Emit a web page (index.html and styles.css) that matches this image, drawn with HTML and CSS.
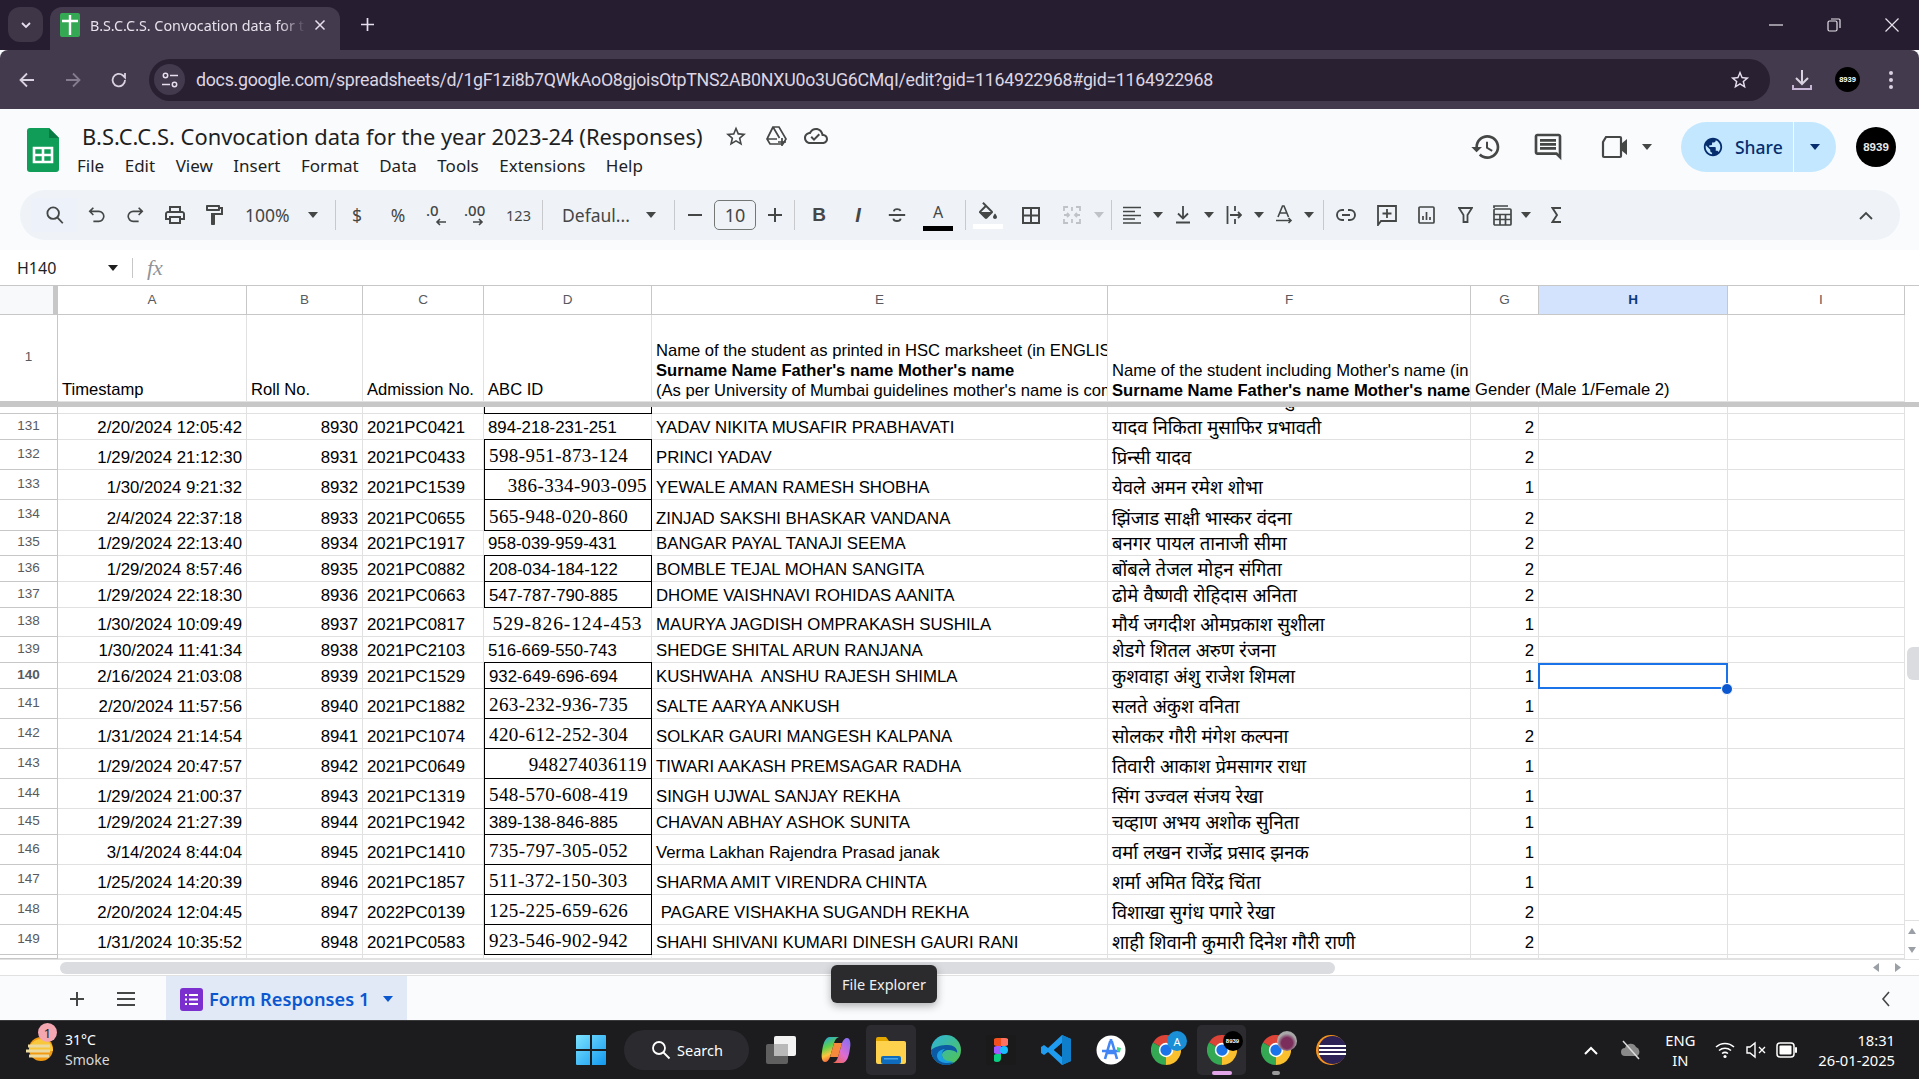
FILE: index.html
```html
<!DOCTYPE html>
<html lang="en">
<head>
<meta charset="utf-8">
<title>B.S.C.C.S. Convocation data for the year 2023-24 (Responses)</title>
<link rel="stylesheet" href="styles.css">
</head>
<body>
<svg class="defs" width="0" height="0">
  <symbol id="chrome" viewBox="0 0 48 48">
    <path fill="#db4437" d="M24 24L3.2 12A24 24 0 0 1 44.8 12Z"/>
    <path fill="#fbc02d" d="M24 24L44.8 12A24 24 0 0 1 24 48Z"/>
    <path fill="#34a853" d="M24 24L24 48A24 24 0 0 1 3.2 12Z"/>
    <circle cx="24" cy="24" r="11.5" fill="#fff"/>
    <circle cx="24" cy="24" r="9" fill="#1a73e8"/>
  </symbol>
  <symbol id="caret" viewBox="0 0 10 6"><path d="M0 0h10L5 6z" fill="currentColor"/></symbol>
  <symbol id="star" viewBox="0 0 24 24"><path fill="currentColor" d="M22 9.24l-7.19-.62L12 2 9.19 8.63 2 9.24l5.46 4.73L5.82 21 12 17.27 18.18 21l-1.63-7.03L22 9.24zM12 15.4l-3.76 2.27 1-4.28-3.32-2.88 4.38-.38L12 6.1l1.71 4.04 4.38.38-3.32 2.88 1 4.28L12 15.4z"/></symbol>
</svg>

<div class="tabstrip">
  <div class="tabsearch"><svg width="14" height="14" viewBox="0 0 14 14"><path d="M3 5l4 4 4-4" fill="none" stroke="#e6dfee" stroke-width="1.8"/></svg></div>
  <div class="tab">
    <svg class="favicon" width="20" height="24" viewBox="0 0 20 24"><rect width="20" height="24" rx="2" fill="#34a853"/><path d="M2 8h16M10 2v20" stroke="#fff" stroke-width="2.4"/></svg>
    <span class="tabtitle">B.S.C.C.S. Convocation data for t</span>
    <svg class="tabclose" width="12" height="12" viewBox="0 0 12 12"><path d="M1.500 1.500l9 9M10.500 1.500l-9 9" stroke="#e6dfee" stroke-width="1.500"/></svg>
  </div>
  <svg class="newtab" width="15" height="15" viewBox="0 0 15 15"><path d="M7.500 1v13M1 7.500h13" stroke="#e6dfee" stroke-width="1.700"/></svg>
  <div class="winctrl">
    <svg width="14" height="14" viewBox="0 0 14 14"><path d="M0 7h14" stroke="#e6e1ea" stroke-width="1.200"/></svg>
    <svg width="14" height="14" viewBox="0 0 14 14"><rect x="1" y="3" width="9" height="10" rx="1.500" fill="none" stroke="#e6e1ea" stroke-width="1.200"/><path d="M4 1h8a1 1 0 0 1 1 1v8" fill="none" stroke="#e6e1ea" stroke-width="1.200"/></svg>
    <svg width="14" height="14" viewBox="0 0 14 14"><path d="M.5.500l13 13M13.500.500l-13 13" stroke="#e6e1ea" stroke-width="1.200"/></svg>
  </div>
</div>

<div class="navbar">
  <svg class="nav" width="20" height="20" viewBox="0 0 20 20"><path d="M17 10H4M10 3.500L3.500 10l6.500 6.500" fill="none" stroke="#d9d2e0" stroke-width="1.800"/></svg>
  <svg class="nav" width="20" height="20" viewBox="0 0 20 20"><path d="M3 10h13M10 3.500l6.500 6.500-6.500 6.500" fill="none" stroke="#857d8f" stroke-width="1.800"/></svg>
  <svg class="nav" width="20" height="20" viewBox="0 0 20 20"><path d="M16 10a6.200 6.200 0 1 1-2-4.500L16 7.500V3" fill="none" stroke="#d9d2e0" stroke-width="1.800"/></svg>
  <div class="omnibox">
    <div class="siteinfo"><svg width="18" height="18" viewBox="0 0 18 18"><g fill="none" stroke="#e6dfee" stroke-width="1.500"><circle cx="4.500" cy="4.500" r="2.200"/><circle cx="13.500" cy="13.500" r="2.200"/><path d="M9 4.500h8M1 13.500h8"/></g></svg></div>
    <span class="url">docs.google.com/spreadsheets/d/1gF1zi8b7QWkAoO8gjoisOtpTNS2AB0NXU0o3UG6CMqI/edit?gid=1164922968#gid=1164922968</span>
    <svg class="ostar" width="22" height="22"><use href="#star"/></svg>
  </div>
  <svg class="dl" width="24" height="24" viewBox="0 0 24 24"><path d="M12 2v13M6 10l6 6 6-6" fill="none" stroke="#d9d2e0" stroke-width="2"/><path d="M3 17v4h18v-4" fill="none" stroke="#c8b6d6" stroke-width="2"/></svg>
  <div class="navavatar">8939</div>
  <svg class="dots" width="6" height="20" viewBox="0 0 6 20"><circle cx="3" cy="3" r="2" fill="#d9d2e0"/><circle cx="3" cy="10" r="2" fill="#d9d2e0"/><circle cx="3" cy="17" r="2" fill="#d9d2e0"/></svg>
</div>

<header class="apphead">
  <svg class="logo" width="32" height="44" viewBox="0 0 32 44"><path d="M3 0h19l10 10v31a3 3 0 0 1-3 3H3a3 3 0 0 1-3-3V3a3 3 0 0 1 3-3z" fill="#0f9d58"/><path d="M22 0l10 10H22z" fill="#0a7a43"/><path d="M7 20h18v14H7zM16 20v14M7 27h18" fill="none" stroke="#fff" stroke-width="2.600"/></svg>
  <div class="titleblock">
    <div class="titlerow">
      <span class="doctitle">B.S.C.C.S. Convocation data for the year 2023-24 (Responses)</span>
      <svg class="hic first" width="24" height="24"><use href="#star"/></svg>
      <svg class="hic" width="24" height="24" viewBox="0 0 24 24"><path d="M9 3h6l7 12-3 5H6l-3-5zM3.500 15H13M9 3l6.500 11M9 3L3.500 14" fill="none" stroke="#444746" stroke-width="1.700"/><path d="M18 14v8M14 18h8" stroke="#444746" stroke-width="1.700"/></svg>
      <svg class="hic" width="24" height="24" viewBox="0 0 24 24"><path fill="#444746" d="M19.350 10.040C18.670 6.590 15.640 4 12 4 9.110 4 6.600 5.640 5.350 8.040 2.340 8.360 0 10.910 0 14c0 3.310 2.690 6 6 6h13c2.760 0 5-2.240 5-5 0-2.640-2.050-4.780-4.650-4.960zM19 18H6c-2.210 0-4-1.790-4-4 0-2.050 1.530-3.760 3.560-3.970l1.070-.11.5-.95C8.080 7.140 9.940 6 12 6c2.620 0 4.880 1.860 5.390 4.430l.3 1.500 1.530.11c1.560.1 2.780 1.410 2.780 2.960 0 1.650-1.350 3-3 3zm-9-3.820l-2.090-2.090L6.500 13.500 10 17l6.010-6.010-1.410-1.410z"/></svg>
    </div>
    <nav class="menu"><span>File</span><span>Edit</span><span>View</span><span>Insert</span><span>Format</span><span>Data</span><span>Tools</span><span>Extensions</span><span>Help</span></nav>
  </div>
  <div class="headright">
    <svg class="hbtn" width="32" height="32" viewBox="0 0 24 24"><path fill="#444746" d="M13 3c-4.970 0-9 4.030-9 9H1l3.890 3.890.07.14L9 12H6c0-3.870 3.130-7 7-7s7 3.130 7 7-3.130 7-7 7c-1.930 0-3.680-.79-4.940-2.060l-1.420 1.420C8.270 19.990 10.510 21 13 21c4.970 0 9-4.030 9-9s-4.030-9-9-9zm-1 5v5l4.280 2.540.72-1.210-3.500-2.080V8H12z"/></svg>
    <svg class="hbtn b2" width="32" height="32" viewBox="0 0 24 24"><path fill="#444746" d="M21.990 4c0-1.100-.89-2-1.990-2H4c-1.100 0-2 .9-2 2v12c0 1.100.9 2 2 2h14l4 4-.01-18zM20 4v13.170L18.830 16H4V4h16zM6 12h12v2H6zm0-3h12v2H6zm0-3h12v2H6z"/></svg>
    <svg class="video" width="30" height="26" viewBox="0 0 30 26"><path d="M5 3h14a1 1 0 0 1 1 1v18a1 1 0 0 1-1 1H3a1 1 0 0 1-1-1V8z" fill="none" stroke="#444746" stroke-width="2.200"/><path d="M20 10l6-5v16l-6-5z" fill="#444746"/></svg>
    <svg class="vcaret" width="10" height="6"><use href="#caret"/></svg>
    <div class="share">
      <div class="sharemain">
        <svg width="22" height="22" viewBox="0 0 24 24"><path fill="#062e6f" d="M12 2C6.480 2 2 6.480 2 12s4.480 10 10 10 10-4.480 10-10S17.520 2 12 2zM4 12c0-.61.08-1.210.21-1.780L8.990 15v1c0 1.100.9 2 2 2v1.930C7.060 19.430 4 16.070 4 12zm13.890 5.400c-.26-.81-1-1.400-1.900-1.400h-1v-3c0-.55-.45-1-1-1h-6v-2h2c.55 0 1-.45 1-1V7h2c1.100 0 2-.9 2-2v-.41C17.920 5.770 20 8.650 20 12c0 2.080-.81 3.980-2.110 5.400z"/></svg>
        <span>Share</span>
      </div>
      <div class="sharecaret"><svg width="10" height="6"><use href="#caret"/></svg></div>
    </div>
    <div class="appavatar">8939</div>
  </div>
</header>

<div class="toolwrap">
  <div class="toolbar">
    <div class="tb w47 hl"><svg width="22" height="22" viewBox="0 0 24 24"><circle cx="10" cy="10" r="6.300" fill="none" stroke="#444746" stroke-width="2"/><path d="M14.500 14.500l6 6.500" stroke="#444746" stroke-width="2"/></svg></div>
    <div class="tb w37"><svg width="20" height="20" viewBox="0 0 22 22"><path d="M7 3L3 7l4 4M3 7h10a5.500 5.500 0 0 1 0 11H7" fill="none" stroke="#444746" stroke-width="1.800"/></svg></div>
    <div class="tb w40"><svg width="20" height="20" viewBox="0 0 22 22"><path d="M15 3l4 4-4 4M19 7H9a5.500 5.500 0 0 0 0 11h6" fill="none" stroke="#444746" stroke-width="1.800"/></svg></div>
    <div class="tb w40"><svg width="24" height="24" viewBox="0 0 24 24"><path fill="#444746" d="M19 8h-1V3H6v5H5c-1.660 0-3 1.340-3 3v6h4v4h12v-4h4v-6c0-1.660-1.340-3-3-3zM8 5h8v3H8V5zm8 12v2H8v-4h8v2zm2-2v-2H6v2H4v-4c0-.55.45-1 1-1h14c.55 0 1 .45 1 1v4h-2z"/></svg></div>
    <div class="tb w37"><svg width="24" height="24" viewBox="0 0 24 24"><path fill="#444746" d="M18 4V3c0-.55-.45-1-1-1H5c-.55 0-1 .45-1 1v4c0 .55.45 1 1 1h12c.55 0 1-.45 1-1V6h1v4H9v11c0 .55.45 1 1 1h2c.55 0 1-.45 1-1v-9h8V4h-3zm-2 2H6V4h10v2z"/></svg></div>
    <div class="zoomsel"><span>100%</span><svg width="10" height="6"><use href="#caret"/></svg></div>
    <i class="sep"></i>
    <div class="tb w42 tt">$</div>
    <div class="tb w40 tt">%</div>
    <div class="tb w37"><svg width="26" height="26" viewBox="0 0 26 26"><text class="dectext" x="2" y="14">.0</text><path d="M22 20h-9M16 17l-3 3 3 3" fill="none" stroke="#444746" stroke-width="1.600"/></svg></div>
    <div class="tb w46"><svg width="30" height="26" viewBox="0 0 30 26"><text class="dectext" x="1" y="14">.00</text><path d="M10 20h9M16 17l3 3-3 3" fill="none" stroke="#444746" stroke-width="1.600"/></svg></div>
    <div class="tb w35 tt small">123</div>
    <div class="w6"></div>
    <i class="sep"></i>
    <div class="fontsel"><span>Defaul...</span><svg width="10" height="6"><use href="#caret"/></svg></div>
    <i class="sep"></i>
    <div class="tb w39"><svg width="14" height="14" viewBox="0 0 14 14"><path d="M0 7h14" stroke="#444746" stroke-width="2"/></svg></div>
    <div class="sizebox">10</div>
    <div class="tb w38"><svg width="16" height="16" viewBox="0 0 16 16"><path d="M8 1v14M1 8h14" stroke="#444746" stroke-width="2"/></svg></div>
    <i class="sep"></i>
    <div class="tb w48 tt bold">B</div>
    <div class="tb w30 tt bold ital">I</div>
    <div class="tb w48"><svg width="22" height="20" viewBox="0 0 22 22"><path d="M15 6.500C14 4 8 3.500 7.500 7M7 15c.5 3.500 7.500 3.500 8 0M2 11h18" fill="none" stroke="#444746" stroke-width="2"/></svg></div>
    <div class="tb w34 col"><span class="tt colora">A</span><i class="bar"></i></div>
    <div class="w10"></div>
    <i class="sep"></i>
    <div class="tb w44 col"><svg width="24" height="22" viewBox="0 0 24 22"><path fill="#444746" d="M16.560 8.940L7.620 0 6.210 1.410l2.380 2.380-5.150 5.150c-.59.590-.59 1.540 0 2.120l5.500 5.500c.29.29.68.44 1.060.44s.77-.15 1.060-.44l5.500-5.500c.59-.58.59-1.530 0-2.120zM5.210 10L10 5.210 14.790 10H5.210zM19 11.500s-2 2.170-2 3.500c0 1.100.9 2 2 2s2-.9 2-2c0-1.330-2-3.500-2-3.500z"/></svg><i class="bar white"></i></div>
    <div class="tb w42"><svg width="18" height="17" viewBox="0 0 18 17"><path d="M1 1h16v15H1zM9 1v15M1 8.500h16" fill="none" stroke="#444746" stroke-width="2"/></svg></div>
    <div class="tb w40"><svg width="18" height="18" viewBox="0 0 18 18"><path d="M1 5V1h4M13 1h4v4M1 13v4h4M13 17h4v-4M6 9H1M12 9h5M4 7l2 2-2 2M14 7l-2 2 2 2M9 1v4M9 13v4" fill="none" stroke="#bfc2c6" stroke-width="1.800"/></svg></div>
    <div class="tb w14 dim"><svg width="10" height="6"><use href="#caret"/></svg></div>
    <div class="w5"></div>
    <i class="sep"></i>
    <div class="tb w40"><svg width="18" height="18" viewBox="0 0 18 18"><path d="M0 1.500h18M0 5.500h12M0 9.500h18M0 13h12M0 17h18" stroke="#444746" stroke-width="1.700"/></svg></div>
    <div class="tb w11"><svg width="10" height="6"><use href="#caret"/></svg></div>
    <div class="tb w40"><svg width="16" height="18" viewBox="0 0 16 18"><path d="M8 0v12M3 7.500l5 5 5-5" fill="none" stroke="#444746" stroke-width="1.800"/><path d="M1 16.500h14" stroke="#444746" stroke-width="2"/></svg></div>
    <div class="tb w11"><svg width="10" height="6"><use href="#caret"/></svg></div>
    <div class="tb w40"><svg width="16" height="18" viewBox="0 0 16 18"><path d="M1.500 0v18M9 0v5M9 13v5M4 9h11M12 6l3 3-3 3" fill="none" stroke="#444746" stroke-width="1.800"/></svg></div>
    <div class="tb w10"><svg width="10" height="6"><use href="#caret"/></svg></div>
    <div class="tb w40"><svg width="17" height="20" viewBox="0 0 17 20"><path d="M2 12L6.500 1h1.500L12.500 12M3.500 8h7.500" fill="none" stroke="#444746" stroke-width="1.600"/><path d="M0 15.500h15M12.500 13l2.500 2.500-2.500 2.500" fill="none" stroke="#444746" stroke-width="1.600"/></svg></div>
    <div class="tb w9"><svg width="10" height="6"><use href="#caret"/></svg></div>
    <div class="w10"></div>
    <i class="sep"></i>
    <div class="tb w44"><svg width="20" height="14" viewBox="0 0 20 14"><path d="M8 2H6a5 5 0 0 0 0 10h2M12 2h2a5 5 0 0 1 0 10h-2M6 7h8" fill="none" stroke="#444746" stroke-width="1.900"/></svg></div>
    <div class="tb w38"><svg width="20" height="21" viewBox="0 0 20 21"><path d="M1 1h18v15H4l-3 4zM10 4v9M5.500 8.500h9" fill="none" stroke="#444746" stroke-width="1.800"/></svg></div>
    <div class="tb w40"><svg width="17" height="18" viewBox="0 0 17 18"><path d="M2 1h13a1 1 0 0 1 1 1v14a1 1 0 0 1-1 1H2a1 1 0 0 1-1-1V2a1 1 0 0 1 1-1zM5 10v4M8.500 6v8M12 11v3" fill="none" stroke="#444746" stroke-width="1.700"/></svg></div>
    <div class="tb w38"><svg width="15" height="16" viewBox="0 0 15 16"><path d="M1 1h13L9.500 8v7h-4V8z" fill="none" stroke="#444746" stroke-width="1.800"/></svg></div>
    <div class="tb w38"><svg width="20" height="21" viewBox="0 0 20 21"><path d="M1 3V1h14M2 4h15a1 1 0 0 1 1 1v14a1 1 0 0 1-1 1H2a1 1 0 0 1-1-1V5a1 1 0 0 1 1-1zM1 9.500h17M7 9.500V20M12.500 9.500V20M1 14.500h17" fill="none" stroke="#444746" stroke-width="1.700"/></svg></div>
    <div class="tb w8"><svg width="10" height="6"><use href="#caret"/></svg></div>
    <div class="tb w52"><svg width="11" height="16" viewBox="0 0 11 16"><path d="M10 1H1.500L6 8l-4.500 7H10" fill="none" stroke="#444746" stroke-width="1.900"/></svg></div>
    <div class="collapse"><svg width="14" height="9" viewBox="0 0 14 9"><path d="M1 8l6-6 6 6" fill="none" stroke="#444746" stroke-width="1.800"/></svg></div>
  </div>
</div>

<div class="formulabar">
  <div class="namebox"><span>H140</span><svg width="10" height="6"><use href="#caret"/></svg></div>
  <i class="fxsep"></i>
  <span class="fx">fx</span>
</div>

<div class="grid">
  <div class="row colhead">
    <div class="corner"></div><div class="ch">A</div><div class="ch">B</div><div class="ch">C</div><div class="ch">D</div><div class="ch">E</div><div class="ch">F</div><div class="ch">G</div><div class="ch selh">H</div><div class="ch lastch">I</div>
  </div>
  <div class="row first">
    <div class="rh rhc">1</div>
    <div class="c">Timestamp</div>
    <div class="c">Roll No.</div>
    <div class="c">Admission No.</div>
    <div class="c">ABC ID</div>
    <div class="c clip">Name of the student as printed in HSC marksheet (in ENGLISH)<br><b>Surname Name Father's name Mother's name</b><br>(As per University of Mumbai guidelines mother's name is compulsory)</div>
    <div class="c clip">Name of the student including Mother's name (in Devanagari)<br><b>Surname Name Father's name Mother's name</b></div>
    <div class="c over">Gender (Male 1/Female 2)</div>
    <div class="c"></div>
    <div class="c"></div>
  </div>
  <div class="freeze"></div>
  <div class="body">
    <div class="rows">
      <div class="row h7"><div class="rh"></div><div class="c r">1/30/2024 9:42:15</div><div class="c r">8929</div><div class="c">2021PC0251</div><div class="c box"></div><div class="c">WANKHADE ASHISH ANIL MADHURI</div><div class="c">वानखडे आशिष अनिल माधुरी</div><div class="c r">1</div><div class="c"></div><div class="c"></div></div>
      <div class="row h26"><div class="rh">131</div><div class="c r">2/20/2024 12:05:42</div><div class="c r">8930</div><div class="c">2021PC0421</div><div class="c">894-218-231-251</div><div class="c">YADAV NIKITA MUSAFIR PRABHAVATI</div><div class="c">यादव निकिता मुसाफिर प्रभावती</div><div class="c r">2</div><div class="c"></div><div class="c"></div></div>
      <div class="row h30"><div class="rh">132</div><div class="c r">1/29/2024 21:12:30</div><div class="c r">8931</div><div class="c">2021PC0433</div><div class="c box tm top">598-951-873-124</div><div class="c">PRINCI YADAV</div><div class="c">प्रिन्सी यादव</div><div class="c r">2</div><div class="c"></div><div class="c"></div></div>
      <div class="row h30"><div class="rh">133</div><div class="c r">1/30/2024 9:21:32</div><div class="c r">8932</div><div class="c">2021PC1539</div><div class="c box tm r">386-334-903-095</div><div class="c">YEWALE AMAN RAMESH SHOBHA</div><div class="c">येवले अमन रमेश शोभा</div><div class="c r">1</div><div class="c"></div><div class="c"></div></div>
      <div class="row h31"><div class="rh">134</div><div class="c r">2/4/2024 22:37:18</div><div class="c r">8933</div><div class="c">2021PC0655</div><div class="c box tm">565-948-020-860</div><div class="c">ZINJAD SAKSHI BHASKAR VANDANA</div><div class="c">झिंजाड साक्षी भास्कर वंदना</div><div class="c r">2</div><div class="c"></div><div class="c"></div></div>
      <div class="row h25"><div class="rh">135</div><div class="c r">1/29/2024 22:13:40</div><div class="c r">8934</div><div class="c">2021PC1917</div><div class="c">958-039-959-431</div><div class="c">BANGAR PAYAL TANAJI SEEMA</div><div class="c">बनगर पायल तानाजी सीमा</div><div class="c r">2</div><div class="c"></div><div class="c"></div></div>
      <div class="row h26"><div class="rh">136</div><div class="c r">1/29/2024 8:57:46</div><div class="c r">8935</div><div class="c">2021PC0882</div><div class="c box top">208-034-184-122</div><div class="c">BOMBLE TEJAL MOHAN SANGITA</div><div class="c">बोंबले तेजल मोहन संगिता</div><div class="c r">2</div><div class="c"></div><div class="c"></div></div>
      <div class="row h26"><div class="rh">137</div><div class="c r">1/29/2024 22:18:30</div><div class="c r">8936</div><div class="c">2021PC0663</div><div class="c box">547-787-790-885</div><div class="c">DHOME VAISHNAVI ROHIDAS AANITA</div><div class="c">ढोमे वैष्णवी रोहिदास अनिता</div><div class="c r">2</div><div class="c"></div><div class="c"></div></div>
      <div class="row h29"><div class="rh">138</div><div class="c r">1/30/2024 10:09:49</div><div class="c r">8937</div><div class="c">2021PC0817</div><div class="c tm wide">529-826-124-453</div><div class="c">MAURYA JAGDISH OMPRAKASH SUSHILA</div><div class="c">मौर्य जगदीश ओमप्रकाश सुशीला</div><div class="c r">1</div><div class="c"></div><div class="c"></div></div>
      <div class="row h26"><div class="rh">139</div><div class="c r">1/30/2024 11:41:34</div><div class="c r">8938</div><div class="c">2021PC2103</div><div class="c">516-669-550-743</div><div class="c">SHEDGE SHITAL ARUN RANJANA</div><div class="c">शेडगे शितल अरुण रंजना</div><div class="c r">2</div><div class="c"></div><div class="c"></div></div>
      <div class="row h26"><div class="rh selh">140</div><div class="c r">2/16/2024 21:03:08</div><div class="c r">8939</div><div class="c">2021PC1529</div><div class="c box top">932-649-696-694</div><div class="c">KUSHWAHA &nbsp;ANSHU RAJESH SHIMLA</div><div class="c">कुशवाहा अंशु राजेश शिमला</div><div class="c r">1</div><div class="c sel"></div><div class="c"></div></div>
      <div class="row h30"><div class="rh">141</div><div class="c r">2/20/2024 11:57:56</div><div class="c r">8940</div><div class="c">2021PC1882</div><div class="c box tm">263-232-936-735</div><div class="c">SALTE AARYA ANKUSH</div><div class="c">सलते अंकुश वनिता</div><div class="c r">1</div><div class="c"></div><div class="c"></div></div>
      <div class="row h30"><div class="rh">142</div><div class="c r">1/31/2024 21:14:54</div><div class="c r">8941</div><div class="c">2021PC1074</div><div class="c box tm">420-612-252-304</div><div class="c">SOLKAR GAURI MANGESH KALPANA</div><div class="c">सोलकर गौरी मंगेश कल्पना</div><div class="c r">2</div><div class="c"></div><div class="c"></div></div>
      <div class="row h30"><div class="rh">143</div><div class="c r">1/29/2024 20:47:57</div><div class="c r">8942</div><div class="c">2021PC0649</div><div class="c box tm r">948274036119</div><div class="c">TIWARI AAKASH PREMSAGAR RADHA</div><div class="c">तिवारी आकाश प्रेमसागर राधा</div><div class="c r">1</div><div class="c"></div><div class="c"></div></div>
      <div class="row h30"><div class="rh">144</div><div class="c r">1/29/2024 21:00:37</div><div class="c r">8943</div><div class="c">2021PC1319</div><div class="c box tm">548-570-608-419</div><div class="c">SINGH UJWAL SANJAY REKHA</div><div class="c">सिंग उज्वल संजय रेखा</div><div class="c r">1</div><div class="c"></div><div class="c"></div></div>
      <div class="row h26"><div class="rh">145</div><div class="c r">1/29/2024 21:27:39</div><div class="c r">8944</div><div class="c">2021PC1942</div><div class="c box">389-138-846-885</div><div class="c">CHAVAN ABHAY ASHOK SUNITA</div><div class="c">चव्हाण अभय अशोक सुनिता</div><div class="c r">1</div><div class="c"></div><div class="c"></div></div>
      <div class="row h30"><div class="rh">146</div><div class="c r">3/14/2024 8:44:04</div><div class="c r">8945</div><div class="c">2021PC1410</div><div class="c box tm">735-797-305-052</div><div class="c">Verma Lakhan Rajendra Prasad janak</div><div class="c">वर्मा लखन राजेंद्र प्रसाद झनक</div><div class="c r">1</div><div class="c"></div><div class="c"></div></div>
      <div class="row h30"><div class="rh">147</div><div class="c r">1/25/2024 14:20:39</div><div class="c r">8946</div><div class="c">2021PC1857</div><div class="c box tm">511-372-150-303</div><div class="c">SHARMA AMIT VIRENDRA CHINTA</div><div class="c">शर्मा अमित विरेंद्र चिंता</div><div class="c r">1</div><div class="c"></div><div class="c"></div></div>
      <div class="row h30"><div class="rh">148</div><div class="c r">2/20/2024 12:04:45</div><div class="c r">8947</div><div class="c">2022PC0139</div><div class="c box tm">125-225-659-626</div><div class="c">&nbsp;PAGARE VISHAKHA SUGANDH REKHA</div><div class="c">विशाखा सुगंध पगारे रेखा</div><div class="c r">2</div><div class="c"></div><div class="c"></div></div>
      <div class="row h30"><div class="rh">149</div><div class="c r">1/31/2024 10:35:52</div><div class="c r">8948</div><div class="c">2021PC0583</div><div class="c box tm">923-546-902-942</div><div class="c">SHAHI SHIVANI KUMARI DINESH GAURI RANI</div><div class="c">शाही शिवानी कुमारी दिनेश गौरी राणी</div><div class="c r">2</div><div class="c"></div><div class="c"></div></div>
      <div class="row h4"><div class="rh"></div><div class="c"></div><div class="c"></div><div class="c"></div><div class="c"></div><div class="c"></div><div class="c"></div><div class="c"></div><div class="c"></div><div class="c"></div></div>
    </div>
    <div class="vscroll">
      <div class="vthumb"></div>
      <div class="varrows">
        <svg width="8" height="6"><path d="M0 6h8L4 0z" fill="#9aa0a6"/></svg>
        <svg width="8" height="6"><path d="M0 0h8L4 6z" fill="#9aa0a6"/></svg>
      </div>
    </div>
  </div>
  <div class="hscroll">
    <div class="hthumb"></div>
    <div class="harrows">
      <svg width="6" height="9"><path d="M6 0v9L0 4.500z" fill="#9aa0a6"/></svg>
      <svg width="6" height="9"><path d="M0 0v9l6-4.500z" fill="#9aa0a6"/></svg>
    </div>
  </div>
</div>

<div class="sheetbar">
  <svg class="addsheet" width="16" height="16" viewBox="0 0 16 16"><path d="M8 1v14M1 8h14" stroke="#444746" stroke-width="2"/></svg>
  <svg class="allsheets" width="20" height="14" viewBox="0 0 20 14"><path d="M1 1h18M1 7h18M1 13h18" stroke="#444746" stroke-width="2"/></svg>
  <div class="sheettab">
    <svg width="23" height="23" viewBox="0 0 23 23"><rect width="23" height="23" rx="3" fill="#7b2fcf"/><path d="M9 7h9M9 11.500h9M9 16h9M5 7h2M5 11.500h2M5 16h2" stroke="#fff" stroke-width="2"/></svg>
    <span>Form Responses 1</span>
    <svg width="10" height="6"><use href="#caret"/></svg>
  </div>
  <svg class="sidepanel" width="10" height="16" viewBox="0 0 10 16"><path d="M8 1L2 8l6 7" fill="none" stroke="#444746" stroke-width="1.600"/></svg>
</div>

<div class="tooltip">File Explorer</div>

<footer class="taskbar">
  <div class="weather">
    <div class="wicon">
      <svg width="32" height="32" viewBox="0 0 32 32"><circle cx="17" cy="15" r="12" fill="#f29a12"/><path d="M5 17a12 12 0 0 1 24 0z" fill="#f9c73c"/><path d="M4 12h22M2 17h24M5 22h20" stroke="#ecd9a0" stroke-width="3"/></svg>
      <span class="wbadge">1</span>
    </div>
    <div class="wtext"><span>31°C</span><span>Smoke</span></div>
  </div>
  <div class="tbicons">
    <svg class="win" width="30" height="30" viewBox="0 0 30 30"><defs><linearGradient id="w" x1="0" y1="0" x2="1" y2="1"><stop offset="0" stop-color="#7de3ff"/><stop offset="1" stop-color="#1298ef"/></linearGradient></defs><path fill="url(#w)" d="M0 1a1 1 0 0 1 1-1h13v14H0zM16 0h13a1 1 0 0 1 1 1v13H16zM0 16h14v14H1a1 1 0 0 1-1-1zM16 16h14v13a1 1 0 0 1-1 1H16z"/></svg>
    <div class="search">
      <svg width="20" height="20" viewBox="0 0 20 20"><circle cx="8" cy="8" r="6" fill="none" stroke="#fff" stroke-width="1.800"/><path d="M12.500 12.500l6 6" stroke="#fff" stroke-width="1.800"/></svg>
      <span>Search</span>
    </div>
    <svg class="ti t1" width="30" height="28" viewBox="0 0 30 28"><rect y="8" width="22" height="20" rx="2" fill="#5f5f5f"/><rect x="8" width="22" height="20" rx="2" fill="#f2f2f2"/><rect x="8" y="8" width="14" height="12" fill="#b8b8b8"/></svg>
    <svg class="ti t2" width="30" height="30" viewBox="0 0 30 30"><defs><linearGradient id="cpa" x1="0" y1="0" x2=".3" y2="1"><stop offset="0" stop-color="#1f9fe8"/><stop offset=".45" stop-color="#5fd14a"/><stop offset=".75" stop-color="#ffc53d"/><stop offset="1" stop-color="#f4663f"/></linearGradient><linearGradient id="cpb" x1=".7" y1="0" x2="0" y2="1"><stop offset="0" stop-color="#8f6ff0"/><stop offset=".5" stop-color="#e06cd0"/><stop offset="1" stop-color="#f4663f"/></linearGradient></defs><path fill="url(#cpa)" d="M9 2h9c-3 1-4 3-5 6l-4 14c-1 3-3 5-5 5C1 27 0 22 1 17 2 9 4 2 9 2z"/><path fill="url(#cpb)" d="M21 28h-9c3-1 4-3 5-6l4-14c1-3 3-5 5-5 3 0 4 5 3 10-1 8-3 15-8 15z"/><path d="M13 8h8l-4 14H9z" fill="#f58a3c"/></svg>
    <div class="fe">
      <svg width="30" height="27" viewBox="0 0 30 27"><path d="M0 2a2 2 0 0 1 2-2h8l3 4H0z" fill="#e3a700"/><path d="M0 4h28a2 2 0 0 1 2 2v19a2 2 0 0 1-2 2H2a2 2 0 0 1-2-2z" fill="#ffd24d"/><rect x="5" y="19" width="20" height="8" rx="2" fill="#0f6cbd"/><rect x="8" y="21" width="14" height="1.500" fill="#4aa4e8"/></svg>
    </div>
    <svg class="ti t4" width="30" height="30" viewBox="0 0 30 30"><defs><linearGradient id="ed" x1="0" y1="0" x2="1" y2="1"><stop offset="0" stop-color="#2db4e0"/><stop offset="1" stop-color="#52c44a"/></linearGradient></defs><circle cx="15" cy="15" r="15" fill="url(#ed)"/><path d="M0 15A15 15 0 0 0 24 27c-7 2-13-2-13-7 0-3 3-5 7-5 3 0 7 1 8 3 1-4-3-8-9-8-6 0-12 1-17 5z" fill="#0c59a4"/><path d="M11 20c0 4 5 7 11 6-3 2-5 2-7 2-6 0-9-4-9-7 0-5 5-7 8-7-2 1-3 3-3 6z" fill="#1b9de2"/></svg>
    <div class="figma"><svg width="14" height="24" viewBox="0 0 14 24"><path d="M3 0h4v8H3a4 4 0 0 1 0-8z" fill="#f24e1e"/><path d="M7 0h4a4 4 0 0 1 0 8H7z" fill="#ff7262"/><path d="M3 8h4v8H3a4 4 0 0 1 0-8z" fill="#a259ff"/><circle cx="10" cy="12" r="4" fill="#1abcfe"/><path d="M3 16h4v4a4 4 0 1 1-4-4z" fill="#0acf83"/></svg></div>
    <svg class="ti t6" width="30" height="30" viewBox="0 0 30 30"><path d="M21 0l9 4v22l-9 4L7 17l-4 3-3-2v-6l3-2 4 3zM21 8l-8 7 8 7z" fill="#1f9cf0"/><path d="M21 0l9 4v22l-9 4z" fill="#0f7fcc"/><path d="M21 8l-8 7 8 7z" fill="#1c1c1f"/></svg>
    <svg class="ti t7" width="30" height="30" viewBox="0 0 30 30"><circle cx="15" cy="15" r="14.500" fill="#fff"/><path d="M15 4v3M9 24l5-17h2l5 17M11.500 18h7M6 16h18" fill="none" stroke="#4285f4" stroke-width="2.600"/><path d="M21 12l4 1-1 4-3-1z" fill="#3ddc84"/></svg>
    <div class="ci t8"><svg width="30" height="30"><use href="#chrome"/></svg><span class="pin blue">A</span></div>
    <div class="chromeactive">
      <div class="ci"><svg width="30" height="30"><use href="#chrome"/></svg><span class="pin dark">8939</span></div>
      <i class="runbar"></i>
    </div>
    <div class="ci t10"><svg width="30" height="30"><use href="#chrome"/></svg><span class="pin photo"></span><i class="rundot"></i></div>
    <svg class="ti t11" width="30" height="30" viewBox="0 0 30 30"><circle cx="15" cy="15" r="15" fill="#f7941e"/><circle cx="16.500" cy="15" r="14" fill="#2c2255"/><path d="M3 11h27M3 15h27M3 19h27" stroke="#fff" stroke-width="2"/></svg>
  </div>
  <div class="tray">
    <svg class="tr1" width="14" height="9" viewBox="0 0 14 9"><path d="M1 8l6-6 6 6" fill="none" stroke="#fff" stroke-width="2"/></svg>
    <svg class="tr2" width="22" height="20" viewBox="0 0 22 20"><path d="M5 16a4 4 0 0 1 0-8 6 6 0 0 1 11-1 5 5 0 0 1 1 9z" fill="#8a8a8a"/><path d="M3 1l16 18" stroke="#ddd" stroke-width="1.500"/></svg>
    <div class="lang"><span>ENG</span><span>IN</span></div>
    <svg class="tr3" width="20" height="18" viewBox="0 0 20 18"><path d="M1 6a13 13 0 0 1 18 0M4 9.500a9 9 0 0 1 12 0M7 12.500a5 5 0 0 1 6 0" fill="none" stroke="#fff" stroke-width="1.500"/><circle cx="10" cy="15.500" r="1.600" fill="#fff"/></svg>
    <svg class="tr4" width="20" height="18" viewBox="0 0 20 18"><path d="M1 6h3l5-4v14l-5-4H1z" fill="none" stroke="#fff" stroke-width="1.400"/><path d="M13 6l6 6M19 6l-6 6" stroke="#fff" stroke-width="1.400"/></svg>
    <svg class="tr5" width="22" height="18" viewBox="0 0 22 18"><rect x="1" y="2" width="17" height="14" rx="3" fill="none" stroke="#fff" stroke-width="1.500"/><rect x="3.500" y="4.500" width="12" height="9" rx="1" fill="#fff"/><rect x="19" y="6" width="2" height="6" rx="1" fill="#fff"/></svg>
    <div class="clock"><span>18:31</span><span>26-01-2025</span></div>
  </div>
</footer>
</body>
</html>
```
FILE: styles.css
```css
* { box-sizing: border-box; }
html, body { margin: 0; padding: 0; }
body { width: 1919px; height: 1079px; overflow: hidden; position: relative; background: #f9fbfd; font-family: "Liberation Sans", Arial, sans-serif; color: #000; }
.defs { position: absolute; }
svg { display: block; flex: none; }

/* browser chrome */
.tabstrip { height: 50px; background: #261e30; display: flex; align-items: flex-end; padding-left: 8px; }
.tabsearch { width: 35px; height: 35px; margin-bottom: 8px; background: #3f3648; border-radius: 12px; display: flex; align-items: center; justify-content: center; }
.tab { width: 290px; height: 43px; margin-left: 7px; background: #433a4d; border-radius: 12px 12px 0 0; display: flex; align-items: center; padding: 0 0 7px 10px; position: relative; }
.tabtitle { margin-left: 10px; width: 216px; flex: none; font: 14.300px "Noto Sans", sans-serif; color: #e6e1ea; white-space: nowrap; overflow: hidden; -webkit-mask-image: linear-gradient(to right, #000 88%, transparent 100%); mask-image: linear-gradient(to right, #000 88%, transparent 100%); }
.tabclose { margin-left: 8px; }
.newtab { margin: 0 0 18px 20px; }
.winctrl { margin-left: auto; height: 50px; display: flex; align-items: center; gap: 44px; padding-right: 20px; }
.navbar { height: 59px; background: #433a4d; display: flex; align-items: center; padding-left: 17px; border-radius: 8px 8px 0 0; }
.nav { margin-right: 26px; }
.omnibox { width: 1621px; margin-left: -6px; height: 42px; border-radius: 21px; background: #292032; display: flex; align-items: center; padding-left: 5px; color: #e6dfee; }
.siteinfo { width: 31px; height: 31px; border-radius: 50%; background: #433a4d; display: flex; align-items: center; justify-content: center; }
.url { margin-left: 11px; font: 17.800px Roboto, sans-serif; letter-spacing: -.28px; color: #dcd6e2; white-space: nowrap; }
.ostar { margin-left: auto; margin-right: 19px; }
.dl { margin-left: 20px; }
.navavatar { margin-left: 21px; width: 25px; height: 25px; border-radius: 50%; background: #000; color: #fff; font: bold 7.500px "Liberation Sans", sans-serif; display: flex; align-items: center; justify-content: center; }
.dots { margin-left: 28px; }

/* app header */
.apphead { height: 81px; display: flex; padding: 19px 0 0 27px; background: #f9fbfd; }
.logo { margin-right: 23px; }
.titleblock { display: flex; flex-direction: column; margin-top: -6px; }
.titlerow { display: flex; align-items: center; height: 28px; }
.doctitle { font: 21.900px "Noto Sans", sans-serif; color: #1f1f1f; white-space: nowrap; }
.hic { color: #444746; margin-left: 16px; }
.hic.first { margin-left: 22px; }
.menu { display: flex; gap: 20.500px; margin-left: -5px; margin-top: 3px; font: 17px "Noto Sans", sans-serif; color: #1f1f1f; line-height: 26px; }
.headright { margin-left: auto; display: flex; align-items: center; height: 50px; margin-top: -6px; padding-right: 23px; }
.hbtn { margin-right: 30px; }
.hbtn.b2 { margin-right: 37px; }
.video { margin-right: 11px; }
.vcaret { color: #444746; margin-right: 29px; }
.share { width: 155px; height: 50px; background: #c2e7ff; border-radius: 25px; display: flex; color: #062e6f; }
.sharemain { width: 113px; display: flex; align-items: center; padding-left: 21px; gap: 11px; border-right: 1px solid #f9fbfd; font: 500 17.500px "Noto Sans", sans-serif; }
.sharecaret { flex: 1; display: flex; align-items: center; justify-content: center; }
.appavatar { margin-left: 20px; width: 40px; height: 40px; background: #000; border-radius: 50%; color: #e8e8e8; font: bold 11.500px "Liberation Sans", sans-serif; display: flex; align-items: center; justify-content: center; }

/* toolbar */
.toolwrap { height: 60px; padding: 0 19px 10px 20px; background: #f9fbfd; }
.toolbar { height: 50px; background: #eff3f8; border-radius: 25px; display: flex; align-items: center; padding-left: 11px; color: #444746; }
.tb { display: flex; align-items: center; justify-content: center; height: 34px; flex: none; color: #444746; }
.tb.hl { background: #edf1f9; }
.w47 { width: 47px; } .w37 { width: 37px; } .w40 { width: 40px; } .w39 { width: 39px; } .w42 { width: 42px; }
.w36 { width: 36px; } .w44 { width: 44px; } .w38 { width: 38px; } .w6 { width: 6px; flex: none; } .w48 { width: 48px; }
.w30 { width: 30px; } .w34 { width: 34px; } .w10 { width: 10px; flex: none; } .w14 { width: 14px; } .w5 { width: 5px; flex: none; }
.w11 { width: 11px; } .w9 { width: 9px; } .w8 { width: 8px; } .w52 { width: 52px; } .w46 { width: 46px; } .w35 { width: 35px; }
.tt { font: 17.500px "Noto Sans", sans-serif; color: #444746; }
.tt.small { font-size: 14.500px; }
.tt.bold { font-family: "Liberation Sans", sans-serif; font-weight: bold; font-size: 19px; }
.tt.ital { font-style: italic; font-size: 20px; }
.dim { color: #bfc2c6; }
.dectext { font: 500 15px "Noto Sans", sans-serif; fill: #444746; }
.sep { width: 1px; height: 30px; background: #c7c9cc; flex: none; display: block; }
.zoomsel { width: 103px; flex: none; display: flex; align-items: center; justify-content: space-between; padding: 0 17px 0 13px; font: 17.500px "Noto Sans", sans-serif; }
.fontsel { width: 131px; flex: none; display: flex; align-items: center; justify-content: space-between; padding: 0 18px 0 19px; font: 17.500px "Noto Sans", sans-serif; }
.sizebox { width: 42px; height: 30px; border: 1px solid #747775; border-radius: 5px; flex: none; display: flex; align-items: center; justify-content: center; font: 18px "Noto Sans", sans-serif; }
.col { flex-direction: column; height: 40px; }
.colora { line-height: 26px; font-size: 16px; }
.bar { display: block; width: 30px; height: 5px; background: #000; flex: none; margin-top: 1px; }
.bar.white { background: #fff; margin-top: 0; }
.collapse { margin-left: auto; padding-right: 27px; }

/* formula bar */
.formulabar { height: 35px; background: #fff; display: flex; align-items: center; padding-left: 17px; }
.namebox { width: 101px; display: flex; align-items: center; justify-content: space-between; font: 16px "Noto Sans", sans-serif; color: #1f1f1f; }
.fxsep { width: 1px; height: 20px; background: #c7c7c7; margin-left: 14px; display: block; }
.fx { margin-left: 14px; font: italic 22px "Liberation Serif", serif; color: #8f9499; }

/* grid */
.grid { background: #fff; border-top: 1px solid #c7c7c7; height: 691px; font-size: 16.800px; line-height: 18px; }
.row { display: grid; grid-template-columns: 58px 189px 116px 121px 168px 456px 363px 68px 189px 177px; width: 1905px; }
.colhead { height: 29px; background: #fff; }
.corner { background: #f8f9fa; border-right: 5px solid #c7c7c7; border-bottom: 1px solid #c7c7c7; }
.ch { display: flex; align-items: center; justify-content: center; border-right: 1px solid #c7c7c7; border-bottom: 1px solid #c7c7c7; font-size: 13.500px; color: #575a5e; }
.ch.lastch { padding-left: 10px; }
.selh { background: #d3e3fd; color: #0b3a80; font-weight: bold; }
.first { height: 87px; }
.first .c { height: 87px; padding-bottom: 1px; white-space: nowrap; line-height: 20px; position: relative; font-size: 16.600px; }
.first .clip { display: block; overflow: hidden; padding-top: 26px; }
.first .clip:nth-child(7) { padding-top: 46px; }
.first .over { overflow: visible; z-index: 2; border-right-color: transparent; }
.first b { font-weight: bold; font-size: 16.600px; }
.rh { background: #fff; border-right: 1px solid #c7c7c7; border-bottom: 1px solid #c7c7c7; display: flex; align-items: center; justify-content: center; font-size: 13.500px; color: #575a5e; padding-bottom: 2px; }
.c { border-right: 1px solid #e1e1e1; border-bottom: 1px solid #e1e1e1; padding: 0 4px 2px; display: flex; align-items: flex-end; overflow: hidden; white-space: nowrap; font-family: "Liberation Sans", "Noto Sans", sans-serif; min-width: 0; }
.c.r { justify-content: flex-end; }
.rows .c:nth-child(7) { font-size: 18.500px; }
.freeze { height: 5px; width: 100%; background: #c7c7c7; }
.body { display: flex; height: 552px; overflow: hidden; }
.rows { width: 1905px; flex: none; }
.h4 { height: 4px; } .h7 { height: 7px; } .h25 { height: 25px; } .h26 { height: 26px; } .h29 { height: 29px; } .h30 { height: 30px; } .h31 { height: 31px; }
.h4 .c, .h7 .c, .h4 .rh, .h7 .rh { padding-bottom: 0; }
.h7 .c { padding-bottom: 4px; }
.box { border-left: 1px solid #000; border-right: 1px solid #000; border-bottom: 1px solid #000; }
.top { box-shadow: 0 -1px 0 #000; }
.tm { font-family: "Liberation Serif", serif; font-size: 19px; letter-spacing: .42px; line-height: 22px; padding-bottom: 2px; }
.wide { letter-spacing: .9px; justify-content: center; padding: 0 0 1px; font-size: 19.500px; }
.sel { border: 2px solid #1a73e8; position: relative; overflow: visible; margin: 0 0 0 -1px; }
.sel::after { content: ""; position: absolute; right: -7px; bottom: -8px; width: 10px; height: 10px; border-radius: 50%; background: #0b57d0; border: 1px solid #fff; z-index: 3; }
.vscroll { flex: 1; display: flex; flex-direction: column; align-items: flex-end; }
.vthumb { width: 12px; height: 33px; margin-top: 240px; background: #dadce0; border-radius: 6px 0 0 6px; }
.varrows { margin-top: auto; width: 100%; height: 39px; display: flex; flex-direction: column; align-items: center; justify-content: space-around; border-top: 1px solid #e1e1e1; }
.hscroll { height: 17px; background: #fff; border-top: 1px solid #e1e1e1; border-bottom: 1px solid #e1e1e1; display: flex; align-items: center; padding-left: 60px; }
.hthumb { width: 1275px; height: 12px; background: #dadce0; border-radius: 6px; }
.harrows { margin-left: auto; display: flex; gap: 16px; padding-right: 18px; }

/* sheet bar */
.sheetbar { height: 44px; background: #f9fbfd; display: flex; align-items: center; padding: 2px 0 0 69px; }
.allsheets { margin-left: 31px; }
.sheettab { margin: -2px 0 0 30px; width: 241px; height: 44px; background: #e1e9f7; display: flex; align-items: center; padding: 2px 0 0 14px; gap: 6px; color: #0b57d0; font: 600 18.200px "Noto Sans", sans-serif; }
.sheettab span { margin-right: 8px; white-space: nowrap; }
.sidepanel { margin-left: auto; margin-right: 28px; }
.tooltip { position: absolute; left: 831px; top: 965px; width: 106px; height: 38px; background: #2b2b2d; border-radius: 6px; color: #f0f0f0; font: 14.500px "Noto Sans", sans-serif; display: flex; align-items: center; justify-content: center; box-shadow: 0 3px 8px rgba(0,0,0,.3); z-index: 5; }

/* taskbar */
.taskbar { height: 59px; background: #1c1c1f; border-top: 1px solid #3a3a3c; display: flex; align-items: center; position: relative; color: #fff; }
.weather { width: 576px; flex: none; display: flex; align-items: center; padding-left: 24px; }
.wicon { position: relative; width: 36px; height: 36px; display: flex; align-items: center; }
.wbadge { position: absolute; top: -9px; left: 14px; width: 19px; height: 19px; border-radius: 50%; background: #f4a7b0; color: #222; font: 13px "Noto Sans", sans-serif; display: flex; align-items: center; justify-content: center; }
.wtext { display: flex; flex-direction: column; margin-left: 5px; font: 14px "Noto Sans", sans-serif; line-height: 20px; margin-top: -1px; }
.wtext span + span { color: #d8d8d8; }
.tbicons { display: flex; align-items: center; flex: none; height: 58px; }
.search { margin-left: 18px; width: 125px; height: 40px; border-radius: 20px; background: #2b2b2f; display: flex; align-items: center; padding-left: 27px; gap: 6px; font: 14.500px "Noto Sans", sans-serif; }
.ti, .ci { flex: none; }
.t1 { margin-left: 17px; }
.t2 { margin-left: 25px; }
.fe { margin-left: 15px; width: 50px; height: 50px; background: #2c2c30; border-radius: 5px; display: flex; align-items: center; justify-content: center; }
.t4 { margin-left: 15px; }
.figma { margin-left: 25px; width: 30px; height: 30px; background: #1a1a1a; display: flex; align-items: center; justify-content: center; }
.t6 { margin-left: 25px; }
.t7 { margin-left: 25px; }
.ci { position: relative; width: 30px; height: 30px; }
.t8 { margin-left: 25px; }
.pin { position: absolute; top: -4px; right: -6px; width: 20px; height: 20px; border-radius: 50%; display: flex; align-items: center; justify-content: center; font: 11px "Noto Sans", sans-serif; color: #fff; }
.pin.blue { background: #1a8fd6; }
.pin.dark { background: #000; font: bold 6px "Liberation Sans", sans-serif; }
.pin.photo { background: radial-gradient(circle at 50% 60%, #7b2d5c 35%, #a8a8a8 60%); }
.chromeactive { margin-left: 16px; width: 49px; height: 50px; background: #2c2c30; border-radius: 5px; display: flex; flex-direction: column; align-items: center; padding-top: 10px; position: relative; }
.runbar { position: absolute; bottom: 0; width: 20px; height: 4px; border-radius: 2px; background: #e3a6e8; display: block; }
.t10 { margin-left: 15px; }
.rundot { position: absolute; bottom: -10px; left: 11px; width: 8px; height: 4px; border-radius: 2px; background: #9a9a9a; display: block; }
.t11 { margin-left: 25px; }
.tray { margin-left: auto; display: flex; align-items: center; padding-right: 24px; height: 58px; }
.tr2 { margin-left: 22px; }
.lang { margin-left: 23px; display: flex; flex-direction: column; align-items: center; font: 14.700px "Noto Sans", sans-serif; line-height: 20px; }
.tr3 { margin-left: 20px; }
.tr4 { margin-left: 11px; }
.tr5 { margin-left: 10px; }
.clock { margin-left: 20px; display: flex; flex-direction: column; align-items: flex-end; font: 14.700px "Noto Sans", sans-serif; line-height: 20px; }
```
